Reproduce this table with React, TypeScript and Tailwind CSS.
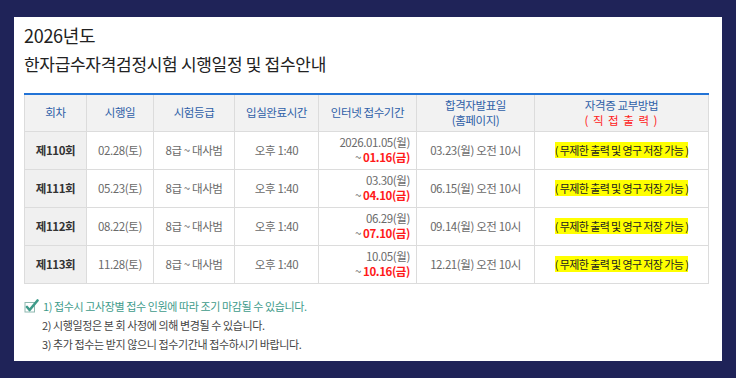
const font = { fontFamily: '"Noto Sans CJK KR", "Noto Sans", sans-serif' };

const rows = [
  { no: "제110회", date: "02.28(토)", from: "2026.01.05(월)", to: "01.16(금)", result: "03.23(월) 오전 10시" },
  { no: "제111회", date: "05.23(토)", from: "03.30(월)", to: "04.10(금)", result: "06.15(월) 오전 10시" },
  { no: "제112회", date: "08.22(토)", from: "06.29(월)", to: "07.10(금)", result: "09.14(월) 오전 10시" },
  { no: "제113회", date: "11.28(토)", from: "10.05(월)", to: "10.16(금)", result: "12.21(월) 오전 10시" },
];

const th = "border-x border-[#dcdcdc] bg-[#f2f2f2] font-normal text-[#2f5fa8]";
const td = "border border-[#dcdcdc] text-center text-[#6a6a6a]";

function CheckIcon() {
  return (
    <svg width="15" height="14" viewBox="0 0 15 14" aria-hidden>
      <rect x="1" y="3.5" width="9.5" height="9.5" fill="none" stroke="#8fb8b0" strokeWidth="1" />
      <path d="M3 8 L5.6 11 L13.5 1.5" fill="none" stroke="#3e9b8a" strokeWidth="2.6" strokeLinecap="round" strokeLinejoin="round" />
    </svg>
  );
}

export default function App() {
  return (
    <div className="h-[378px] w-[736px] bg-[#1f2358] pl-[14px] pt-[17px]" style={font}>
      <div className="h-[344px] w-[708px] bg-white px-[10px] pt-[6px]">
        <h1 className="text-[18px] leading-[24px] tracking-[-0.3px] text-[#222]">2026년도</h1>
        <h2 className="mt-[5px] text-[17px] leading-[24px] tracking-[-0.3px] text-[#222]">
          한자급수자격검정시험 시행일정 및 접수안내
        </h2>

        <table className="mt-[17px] w-[685px] table-fixed border-collapse border-t-2 border-t-[#2273d6] text-[11.5px] tracking-[-0.4px]">
          <colgroup>
            <col className="w-[62px]" />
            <col className="w-[67px]" />
            <col className="w-[81px]" />
            <col className="w-[84px]" />
            <col className="w-[98px]" />
            <col className="w-[118px]" />
            <col />
          </colgroup>
          <thead>
            <tr className="h-[37px] leading-[15px]">
              <th className={th}>회차</th>
              <th className={th}>시행일</th>
              <th className={th}>시험등급</th>
              <th className={th}>입실완료시간</th>
              <th className={th}>인터넷 접수기간</th>
              <th className={th}>
                합격자발표일
                <br />
                (홈페이지)
              </th>
              <th className={th}>
                자격증 교부방법
                <br />
                <span className="tracking-[1px] text-[#ff2020]">( 직 접 출 력 )</span>
              </th>
            </tr>
          </thead>
          <tbody>
            {rows.map((r) => (
              <tr key={r.no} className="h-[38px] leading-[15px]">
                <td className={`${td} bg-[#f0f0f0] font-bold text-[#333]`}>{r.no}</td>
                <td className={td}>{r.date}</td>
                <td className={td}>8급 ~ 대사범</td>
                <td className={td}>오후 1:40</td>
                <td className="border border-[#dcdcdc] pr-[6px] text-right text-[#6a6a6a]">
                  <div>{r.from}</div>
                  <div>
                    ~ <span className="font-bold text-[#ff1a1a]">{r.to}</span>
                  </div>
                </td>
                <td className={td}>{r.result}</td>
                <td className={td}>
                  <span className="bg-[#ffff00] text-[11px] tracking-[-0.6px] text-[#222]">
                    ( 무제한 출력 및 영구 저장 가능 )
                  </span>
                </td>
              </tr>
            ))}
          </tbody>
        </table>

        <div className="mt-[14px] flex flex-col gap-[2px] text-[11px] leading-[17px] tracking-[-0.4px]">
          <div className="flex items-center gap-[4px] text-[#3e9b8a]">
            <CheckIcon />
            <span>1) 접수시 고사장별 접수 인원에 따라 조기 마감될 수 있습니다.</span>
          </div>
          <p className="pl-[18px] text-[#444]">2) 시행일정은 본 회 사정에 의해 변경될 수 있습니다.</p>
          <p className="pl-[18px] text-[#444]">3) 추가 접수는 받지 않으니 접수기간내 접수하시기 바랍니다.</p>
        </div>
      </div>
    </div>
  );
}
